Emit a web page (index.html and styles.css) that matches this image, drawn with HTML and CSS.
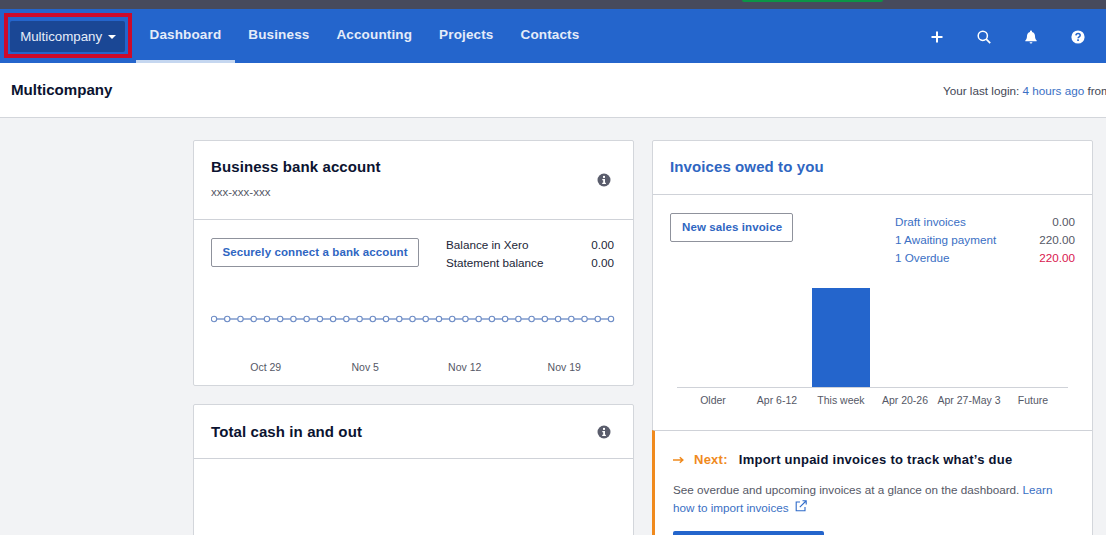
FILE: index.html
```html
<!DOCTYPE html>
<html lang="en">
<head>
  <title>Multicompany - Dashboard</title>
  <link rel="stylesheet" href="styles.css">
</head>
<body>
  <div class="topstrip"><span class="green-tab"></span></div>
  <nav class="navbar">
    <div class="org-highlight">
      <button class="org-btn">Multicompany <span class="caret"></span></button>
    </div>
    <ul class="nav-links">
      <li class="active"><a>Dashboard</a></li>
      <li><a>Business</a></li>
      <li><a>Accounting</a></li>
      <li><a>Projects</a></li>
      <li><a>Contacts</a></li>
    </ul>
    <div class="nav-icons">
      <svg viewBox="0 0 14 14"><path d="M7 1.500v11M1.500 7h11" stroke="#fff" stroke-width="2" fill="none"/></svg>
      <svg viewBox="0 0 14 14"><circle cx="5.800" cy="5.800" r="4.600" stroke="#fff" stroke-width="1.500" fill="none"/><path d="M9.200 9.200l4 4" stroke="#fff" stroke-width="1.700" fill="none"/></svg>
      <svg viewBox="0 0 14 14"><path d="M7 .5c.6 0 1 .4 1 1v.4c2 .5 3 2.100 3 4.100 0 2.500.7 3.500 1.700 4.500v.8H1.300v-.8C2.300 9.500 3 8.500 3 6c0-2 1-3.600 3-4.100v-.4c0-.6.4-1 1-1zM5.600 12.200h2.800a1.400 1.400 0 0 1-2.800 0z" fill="#fff"/></svg>
      <svg viewBox="0 0 14 14"><circle cx="7" cy="7" r="6.600" fill="#fff"/><path d="M4.900 5.400c.1-1.300 1-2 2.200-2 1.200 0 2.100.7 2.100 1.800 0 1.700-2.100 1.600-2.100 3.100" stroke="#2465cc" stroke-width="1.500" fill="none"/><rect x="6.200" y="9.300" width="1.700" height="1.700" fill="#2465cc"/></svg>
    </div>
  </nav>

  <header class="page-head">
    <h1>Multicompany</h1>
    <p class="last-login">Your last login: <a>4 hours ago</a> from</p>
  </header>

  <main class="dash">
    <div class="col">
      <section class="card">
        <div class="card-head bank-head">
          <div>
            <h2>Business bank account</h2>
            <p class="acct-no">xxx-xxx-xxx</p>
          </div>
          <svg class="info" viewBox="0 0 14 14"><circle cx="7" cy="7" r="6.500" fill="#5a5d6c"/><rect x="6" y="2.900" width="2" height="2" fill="#fff"/><path d="M5.300 6h2.700v3.700h.9v1.200H5.200V9.700h1V7.200h-.9z" fill="#fff"/></svg>
        </div>
        <div class="bank-body">
          <div class="bank-row">
            <button class="btn-outline wide">Securely connect a bank account</button>
            <table class="figures balance">
              <tr><td>Balance in Xero</td><td>0.00</td></tr>
              <tr><td>Statement balance</td><td>0.00</td></tr>
            </table>
          </div>
          <svg class="line-chart" viewBox="0 0 404 10">
            <path d="M3 5H400" stroke="#3f68b4" stroke-width="1.200"/>
            <g fill="#fff" stroke="#6d8cc6" stroke-width="1.100">
              <circle cx="3" cy="5" r="2.700"/><circle cx="16.230" cy="5" r="2.700"/><circle cx="29.470" cy="5" r="2.700"/><circle cx="42.700" cy="5" r="2.700"/><circle cx="55.930" cy="5" r="2.700"/><circle cx="69.170" cy="5" r="2.700"/><circle cx="82.400" cy="5" r="2.700"/><circle cx="95.630" cy="5" r="2.700"/><circle cx="108.870" cy="5" r="2.700"/><circle cx="122.100" cy="5" r="2.700"/><circle cx="135.330" cy="5" r="2.700"/><circle cx="148.570" cy="5" r="2.700"/><circle cx="161.800" cy="5" r="2.700"/><circle cx="175.030" cy="5" r="2.700"/><circle cx="188.270" cy="5" r="2.700"/><circle cx="201.500" cy="5" r="2.700"/><circle cx="214.730" cy="5" r="2.700"/><circle cx="227.970" cy="5" r="2.700"/><circle cx="241.200" cy="5" r="2.700"/><circle cx="254.430" cy="5" r="2.700"/><circle cx="267.670" cy="5" r="2.700"/><circle cx="280.900" cy="5" r="2.700"/><circle cx="294.130" cy="5" r="2.700"/><circle cx="307.370" cy="5" r="2.700"/><circle cx="320.600" cy="5" r="2.700"/><circle cx="333.830" cy="5" r="2.700"/><circle cx="347.070" cy="5" r="2.700"/><circle cx="360.300" cy="5" r="2.700"/><circle cx="373.530" cy="5" r="2.700"/><circle cx="386.770" cy="5" r="2.700"/><circle cx="400" cy="5" r="2.700"/>
            </g>
          </svg>
          <div class="line-labels">
            <span>Oct 29</span><span>Nov 5</span><span>Nov 12</span><span>Nov 19</span>
          </div>
        </div>
      </section>

      <section class="card">
        <div class="card-head cash-head">
          <h2>Total cash in and out</h2>
          <svg class="info" viewBox="0 0 14 14"><circle cx="7" cy="7" r="6.500" fill="#5a5d6c"/><rect x="6" y="2.900" width="2" height="2" fill="#fff"/><path d="M5.300 6h2.700v3.700h.9v1.200H5.200V9.700h1V7.200h-.9z" fill="#fff"/></svg>
        </div>
        <div class="cash-body"></div>
      </section>
    </div>

    <div class="col">
      <section class="card">
        <div class="card-head invoices-head">
          <h2 class="link-title">Invoices owed to you</h2>
        </div>
        <div class="inv-body">
          <div class="inv-row">
            <button class="btn-outline">New sales invoice</button>
            <table class="figures owed">
              <tr><td><a>Draft invoices</a></td><td>0.00</td></tr>
              <tr><td><a>1 Awaiting payment</a></td><td>220.00</td></tr>
              <tr><td><a>1 Overdue</a></td><td class="overdue">220.00</td></tr>
            </table>
          </div>
          <div class="bars">
            <div class="bar-slot"></div>
            <div class="bar-slot"></div>
            <div class="bar-slot"><div class="bar"></div></div>
            <div class="bar-slot"></div>
            <div class="bar-slot"></div>
            <div class="bar-slot"></div>
          </div>
          <div class="bar-labels">
            <span>Older</span><span>Apr 6-12</span><span>This week</span><span>Apr 20-26</span><span>Apr 27-May 3</span><span>Future</span>
          </div>
        </div>
        <div class="next">
          <h3>
            <svg class="next-arrow" viewBox="0 0 11 8"><path d="M0 4h9M6.800 1.300L9.800 4l-3 2.700" stroke="#f08a1d" stroke-width="1.500" fill="none"/></svg>
            <span class="next-tag">Next:</span>
            <span>Import unpaid invoices to track what’s due</span>
          </h3>
          <p>See overdue and upcoming invoices at a glance on the dashboard. <a>Learn how to import invoices</a>
            <svg class="ext" viewBox="0 0 12 12"><path d="M5 2H1.200v8.800H10V7" stroke="#2f6bc9" stroke-width="1.100" fill="none"/><path d="M4.800 7.200L11 1M7.500.8h3.700v3.700" stroke="#2f6bc9" stroke-width="1.100" fill="none"/></svg>
          </p>
          <div class="btn-primary"></div>
        </div>
      </section>
    </div>
  </main>
</body>
</html>
```

FILE: styles.css
```css
html, body {
  height: 535px;
  overflow: hidden;
}
body {
  margin: 0;
  width: 1106px;
  font-family: "Liberation Sans", Arial, sans-serif;
  font-size: 11.700px;
  color: #0b1330;
  background-color: #f2f3f5;
}
a {
  color: #3a6fc4;
}
h1, h2, h3, p {
  margin: 0;
}

.topstrip {
  height: 9px;
  background-color: #474a5c;
}
.green-tab {
  display: block;
  width: 141px;
  height: 2px;
  margin-left: 742px;
  background-color: #0c9446;
  border-radius: 0 0 3px 3px;
}

.navbar {
  display: flex;
  align-items: stretch;
  height: 54px;
  background-color: #2465cc;
}
.org-highlight {
  box-sizing: border-box;
  width: 128px;
  height: 45px;
  margin: 4px 4px 0 4px;
  padding: 4px 3px 2px 2px;
  border: 4px solid #cc0a2a;
}
.org-btn {
  width: 100%;
  height: 100%;
  padding: 0 0 0 1px;
  border: none;
  border-radius: 2px;
  font: inherit;
  font-size: 13.300px;
  color: #e6edf9;
  background-color: #1a4795;
}
.caret {
  display: inline-block;
  margin-left: 2px;
  vertical-align: 2px;
  border-top: 4px solid #fff;
  border-left: 4px solid transparent;
  border-right: 4px solid transparent;
}
.nav-links {
  display: flex;
  margin: 0;
  padding: 0;
  list-style: none;
}
.nav-links li {
  box-sizing: border-box;
  display: flex;
  align-items: center;
  padding: 0 13.500px;
  font-size: 13.500px;
  font-weight: bold;
  letter-spacing: 0.140px;
  border-bottom: 3px solid transparent;
}
.nav-links a {
  color: #e4ecf9;
}
.nav-links li.active {
  border-bottom-color: #c5d7f0;
}
.nav-icons {
  display: flex;
  align-items: center;
  gap: 33px;
  margin-left: auto;
  margin-right: 21px;
  padding-top: 1px;
}
.nav-icons svg {
  width: 14px;
  height: 14px;
}

.page-head {
  box-sizing: border-box;
  display: flex;
  align-items: center;
  justify-content: space-between;
  height: 55px;
  padding: 0 0 1px 11px;
  background-color: #fff;
  border-bottom: 1px solid #d3d6db;
  overflow: hidden;
}
.page-head h1 {
  font-size: 15.100px;
}
.last-login {
  flex: none;
  width: 163px;
  margin-top: 2px;
  white-space: nowrap;
  color: #434756;
}

.dash {
  display: grid;
  grid-template-columns: 441px 441px;
  gap: 18px;
  padding: 22px 0 0 193px;
}
.col {
  display: flex;
  flex-direction: column;
  gap: 18px;
}
.card {
  background-color: #fff;
  border: 1px solid #d3d6db;
  border-radius: 2px;
}
.card-head {
  display: flex;
  align-items: center;
  justify-content: space-between;
  padding: 0 22px 0 17px;
  border-bottom: 1px solid #cfd2d8;
}
.card-head h2 {
  font-size: 15px;
  letter-spacing: 0.100px;
}
.bank-head {
  height: 78px;
}
.bank-head h2 {
  margin-top: -4px;
}
.acct-no {
  margin-top: 11px;
  font-size: 11.500px;
  color: #555866;
}
.cash-head {
  height: 53px;
}
.invoices-head {
  box-sizing: border-box;
  height: 54px;
  padding-bottom: 2px;
}
h2.link-title {
  color: #2f66c2;
}
.info {
  width: 14px;
  height: 14px;
}

.btn-outline {
  height: 29px;
  padding: 0 10px 1px 11px;
  font: inherit;
  font-size: 11.500px;
  font-weight: bold;
  letter-spacing: 0.100px;
  color: #2f66c2;
  background-color: #fff;
  border: 1px solid #8f929c;
  border-radius: 2px;
}
.btn-outline.wide {
  width: 208px;
  padding: 0 0 1px;
}
.figures {
  border-collapse: collapse;
  color: #222638;
}
.figures td {
  height: 18px;
  padding: 0;
}
.figures td:last-child {
  text-align: right;
}

.bank-body {
  height: 147px;
  padding: 18px 19px 0 17px;
}
.bank-row {
  display: flex;
  justify-content: space-between;
}
.balance {
  width: 168px;
  height: 36px;
  margin-top: -3px;
  margin-bottom: 3px;
}
.line-chart {
  display: block;
  width: 404px;
  height: 10px;
  margin-top: 40px;
}
.line-labels {
  display: grid;
  grid-template-columns: repeat(4, 99.500px);
  margin: 37px 0 0 5px;
  font-size: 10.500px;
  color: #555866;
  text-align: center;
}
.cash-body {
  height: 90px;
}

.inv-body {
  height: 235px;
  padding: 18px 17px 0 17px;
  box-sizing: border-box;
}
.inv-row {
  display: flex;
  justify-content: space-between;
}
.figures.owed {
  width: 180px;
  height: 54px;
  margin-top: -1px;
  margin-bottom: 1px;
  color: #555866;
}
.overdue {
  color: #d9174f;
}
.bars {
  display: grid;
  grid-template-columns: repeat(6, 64px);
  height: 99px;
  width: 387px;
  margin: 21px 0 0 7px;
  padding-left: 4px;
  border-bottom: 1px solid #cfd2d8;
}
.bar-slot {
  display: flex;
  justify-content: center;
  align-items: flex-end;
}
.bar {
  flex: none;
  width: 58px;
  height: 99px;
  background-color: #2465cc;
}
.bar-labels {
  display: grid;
  grid-template-columns: repeat(6, 64px);
  margin: 6px 0 0 11px;
  font-size: 10.500px;
  color: #555866;
  text-align: center;
  white-space: nowrap;
}

.next {
  height: 120px;
  padding: 21px 20px 0 18px;
  border-top: 1px solid #cfd2d8;
  border-left: 3px solid #f08a1d;
  margin-left: -1px;
}
.next h3 {
  display: flex;
  align-items: center;
  font-size: 13px;
  letter-spacing: 0.250px;
}
.next-arrow {
  width: 11px;
  height: 8px;
  margin-right: 10px;
}
.next-tag {
  margin-right: 11px;
  color: #f08a1d;
}
.next p {
  margin-top: 14px;
  line-height: 18px;
  color: #555866;
}
.ext {
  width: 12px;
  height: 12px;
  margin-left: 3px;
}
.btn-primary {
  width: 151px;
  height: 32px;
  margin-top: 14px;
  border-radius: 2px;
  background-color: #2465cc;
}
```
